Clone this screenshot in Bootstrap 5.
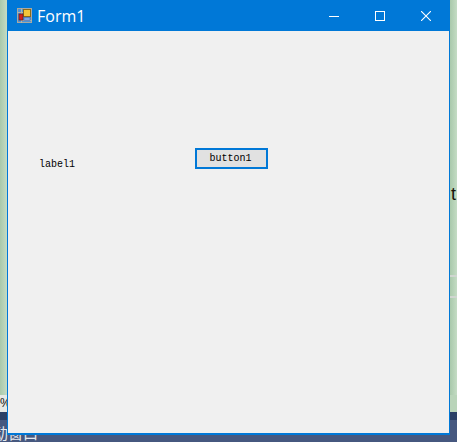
<!DOCTYPE html>
<html lang="zh-cn">
<head>
  <meta charset="UTF-8">
  <meta name="viewport" content="width=device-width, initial-scale=1.0">
  <title>Form1</title>
  <link rel="stylesheet" href="https://cdn.jsdelivr.net/npm/bootstrap@5.3.0/dist/css/bootstrap.min.css">
  <style>
    html, body { height: 100%; }
    body { background: #b9d4b9; overflow: hidden; font-family: "Liberation Mono", monospace; }
    .desk { position: relative; width: 457px; height: 442px; overflow: hidden; }
    .edge-left { position: absolute; left: 0; top: 0; width: 7px; height: 395px; background: linear-gradient(90deg, #a9c9ab, #c4dcc4); }
    .edge-right { position: absolute; left: 450px; top: 0; width: 7px; height: 395px; background: linear-gradient(90deg, #a9c9ab, #c4dcc4); }
    .stripe { position: absolute; left: 450px; width: 7px; height: 2px; background: #d0d6d0; }
    .s1 { top: 275px; }
    .s2 { top: 296px; }
    .peek-t { position: absolute; left: 451px; top: 183px; font: 18px/22px "Liberation Sans", sans-serif; color: #1a1208; }
    .peek-pct { position: absolute; left: 0; top: 395px; width: 7px; height: 17px; background: #e6e9e6; overflow: hidden; font: 12px/17px "Liberation Sans", sans-serif; color: #111; }
    .task-top { position: absolute; left: 0; top: 412px; width: 457px; height: 8px; background: #2b4066; }
    .task-bot { position: absolute; left: 0; top: 420px; width: 457px; height: 22px; background: #46587f; }
    .peek-cn { position: absolute; left: -7px; top: 424px; font: 15px/18px "Noto Sans CJK SC", sans-serif; color: #e4e8ef; }
    .win { position: absolute; left: 7px; top: 0; width: 443px; height: 435px; background: #f0f0f0; border: 1px solid #0078d7; border-top: 0; border-bottom-width: 2px; }
    .titlebar { height: 31px; background: #0078d7; color: #fff; padding-left: 9px; font: 16px/30px "Open Sans", sans-serif; }
    .app-ico { width: 16px; height: 16px; margin-right: 4px; margin-top: 1px; }
    .cap-btns { margin-left: auto; }
    .cap-btn { width: 46px; height: 30px; display: flex; align-items: center; justify-content: center; }
    .form-body { position: relative; height: 402px; }
    .lbl { position: absolute; left: 31px; top: 127px; font-size: 10px; line-height: 14px; color: #000; }
    .btn-form { position: absolute; left: 187px; top: 117px; width: 73px; height: 21px; padding: 0 2px 0 0; border: 2px solid #0078d7; border-radius: 0; background: #e1e1e1; color: #000; font-size: 10px; line-height: 17px; }
  </style>
</head>
<body>
  <div class="desk">
    <div class="edge-left"></div>
    <div class="edge-right"></div>
    <div class="stripe s1"></div>
    <div class="stripe s2"></div>
    <span class="peek-t">t</span>
    <div class="peek-pct">%</div>
    <div class="task-top"></div>
    <div class="task-bot"></div>
    <span class="peek-cn">动窗口</span>

    <div class="win">
      <div class="titlebar d-flex align-items-center">
        <svg class="app-ico" viewBox="0 0 16 16">
          <rect x="0.5" y="0.5" width="14" height="14" fill="#4d93d8" stroke="#a9a9a0"/>
          <path d="M0.5 4.5H6M4.5 0.5V15M4.5 12.5H15" stroke="#b5b5a8" fill="none"/>
          <rect x="6.5" y="1.5" width="7" height="7" fill="#f3c63a" stroke="#8a6a1a"/>
          <rect x="2" y="6" width="4" height="6" fill="#d0231f" stroke="#6e2020" stroke-width="0.8"/>
          <rect x="7" y="9.5" width="6" height="3" fill="#7fa8e6" stroke="#4b6fb0" stroke-width="0.6"/>
        </svg>
        <span>Form1</span>
        <div class="cap-btns d-flex">
          <div class="cap-btn">
            <svg width="10" height="10" viewBox="0 0 10 10"><path d="M0 5.5H10" stroke="#fff" fill="none"/></svg>
          </div>
          <div class="cap-btn">
            <svg width="10" height="10" viewBox="0 0 10 10"><rect x="0.5" y="0.5" width="9" height="9" stroke="#fff" fill="none"/></svg>
          </div>
          <div class="cap-btn">
            <svg width="10" height="10" viewBox="0 0 10 10"><path d="M0 0L10 10M10 0L0 10" stroke="#fff" stroke-width="1.1" fill="none"/></svg>
          </div>
        </div>
      </div>
      <div class="form-body">
        <span class="lbl">label1</span>
        <button type="button" class="btn btn-form">button1</button>
      </div>
    </div>
  </div>
  <script src="https://cdn.jsdelivr.net/npm/bootstrap@5.3.0/dist/js/bootstrap.bundle.min.js"></script>
</body>
</html>
